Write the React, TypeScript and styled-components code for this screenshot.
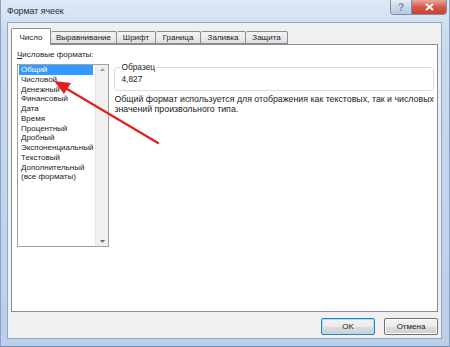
import React from 'react';
import styled, { createGlobalStyle } from 'styled-components';

const GlobalStyle = createGlobalStyle`
  html, body {
    margin: 0;
    padding: 0;
    width: 450px;
    height: 347px;
    overflow: hidden;
    background: #fff;
  }
  * {
    box-sizing: border-box;
  }
`;

const Window = styled.div`
  position: relative;
  width: 450px;
  height: 347px;
  display: flex;
  flex-direction: column;
  padding: 0 7px 7px 6px;
  background: linear-gradient(180deg, #dfe9f5 0%, #c9dbef 10%, #b9cfea 100%);
  border-left: 1px solid #8aa2c4;
  border-right: 1px solid #8aa2c4;
  border-bottom: 1px solid #6f87aa;
  font-family: 'Liberation Sans', Arial, sans-serif;
  font-size: 8px;
  color: #222;
`;

const TitleBar = styled.div`
  height: 22px;
  display: flex;
  align-items: flex-start;
  margin-right: -5px;
`;

const Title = styled.div`
  padding-top: 6px;
  font-size: 8.8px;
  color: #1e2f45;
`;

const CaptionButtons = styled.div`
  margin-left: auto;
  display: flex;
  border: 1px solid #7f8fa6;
  border-top: none;
  border-radius: 0 0 4px 4px;
  overflow: hidden;
  height: 15px;
`;

const CaptionButton = styled.div<{ $close?: boolean }>`
  width: ${({ $close }) => ($close ? '35px' : '20px')};
  height: 100%;
  display: flex;
  align-items: center;
  justify-content: center;
  font-size: 10px;
  font-weight: bold;
  color: ${({ $close }) => ($close ? '#fff' : '#7c8ea8')};
  background: ${({ $close }) =>
    $close
      ? 'linear-gradient(180deg, #e8a89c 0%, #d45a4a 50%, #c8412f 100%)'
      : 'linear-gradient(180deg, #e6eef8 0%, #c9d7e9 50%, #b7c9e1 100%)'};
  border-left: ${({ $close }) => ($close ? '1px solid #7f8fa6' : 'none')};
`;

const Client = styled.div`
  flex: 1;
  display: flex;
  flex-direction: column;
  background: #f0f0f0;
  border: 1px solid #95a6bd;
  padding: 4px 3px 0 3px;
`;

const TabRow = styled.div`
  display: flex;
  align-items: flex-end;
  height: 17px;
  position: relative;
  z-index: 1;
`;

const Tab = styled.div<{ $active?: boolean; $w: number }>`
  width: ${({ $w }) => $w}px;
  height: ${({ $active }) => ($active ? '17px' : '13px')};
  display: flex;
  align-items: center;
  justify-content: center;
  border: 1px solid #898c95;
  border-bottom: ${({ $active }) => ($active ? 'none' : '1px solid #898c95')};
  border-left: ${({ $active }) => ($active ? '1px solid #898c95' : 'none')};
  margin-bottom: ${({ $active }) => ($active ? '-1px' : '0')};
  background: ${({ $active }) =>
    $active ? '#fff' : 'linear-gradient(180deg, #f2f2f2 0%, #ebebeb 50%, #dddddd 100%)'};
  border-radius: 2px 2px 0 0;
  padding-top: ${({ $active }) => ($active ? '1px' : '0')};
  color: #222;
`;

const Panel = styled.div`
  height: 268px;
  background: #fff;
  border: 1px solid #898c95;
  display: flex;
  gap: 5px;
  padding: 4px 5px 0 5px;
`;

const LeftColumn = styled.div`
  width: 96px;
  display: flex;
  flex-direction: column;
`;

const FieldLabel = styled.div`
  height: 15px;
  padding-top: 1px;
  u {
    text-decoration: underline;
  }
`;

const ListBox = styled.div`
  height: 183px;
  border: 1px solid #a0a0a0;
  display: flex;
  background: #fff;
`;

const ListItems = styled.div`
  flex: 1;
  padding: 0 1px;
  overflow: hidden;
`;

const ListItem = styled.div<{ $selected?: boolean }>`
  height: 9.75px;
  line-height: 9.75px;
  padding-left: 2px;
  white-space: nowrap;
  background: ${({ $selected }) => ($selected ? '#3399ff' : 'transparent')};
  color: ${({ $selected }) => ($selected ? '#fff' : '#222')};
  margin-right: 1px;
`;

const ScrollBar = styled.div`
  width: 13px;
  background: #f0f0f0;
  border-left: 1px solid #e6e6e6;
  display: flex;
  flex-direction: column;
  justify-content: space-between;
  align-items: center;
  padding: 3px 0;
`;

const RightColumn = styled.div`
  flex: 1;
  display: flex;
  flex-direction: column;
  padding-top: 13px;
`;

const GroupBox = styled.fieldset`
  margin: 0;
  padding: 0 6px 2px 6px;
  border: 1px solid #d8dde3;
  border-radius: 3px;
  height: 29px;
  legend {
    padding: 0 1px;
    margin-left: -1px;
    font-size: 8.4px;
    line-height: 11px;
  }
`;

const SampleValue = styled.div`
  line-height: 12px;
  font-size: 8.4px;
`;

const Description = styled.div`
  margin-top: 4px;
  line-height: 9.5px;
  font-size: 8.8px;
  white-space: nowrap;
`;

const Footer = styled.div`
  display: flex;
  justify-content: flex-end;
  gap: 9px;
  padding: 6px 0 0 0;
`;

const DialogButton = styled.button<{ $default?: boolean }>`
  width: 54px;
  height: 17px;
  padding: 0;
  font-family: inherit;
  font-size: 8px;
  color: #222;
  border-radius: 2px;
  border: 1px solid ${({ $default }) => ($default ? '#3c7fb1' : '#707070')};
  box-shadow: ${({ $default }) => ($default ? 'inset 0 0 0 1px #9fe1f7' : 'inset 0 0 0 1px #fbfbfb')};
  background: linear-gradient(180deg, #f3f3f3 0%, #ebebeb 50%, #dddddd 51%, #cfcfcf 100%);
`;

const ArrowOverlay = styled.svg`
  position: absolute;
  left: 0;
  top: 0;
  pointer-events: none;
`;

const formats = [
  'Общий',
  'Числовой',
  'Денежный',
  'Финансовый',
  'Дата',
  'Время',
  'Процентный',
  'Дробный',
  'Экспоненциальный',
  'Текстовый',
  'Дополнительный',
  '(все форматы)',
];

const tabs = [
  { label: 'Число', w: 40 },
  { label: 'Выравнивание', w: 66 },
  { label: 'Шрифт', w: 39 },
  { label: 'Граница', w: 45 },
  { label: 'Заливка', w: 45 },
  { label: 'Защита', w: 42 },
];

export default function App() {
  return (
    <>
      <GlobalStyle />
      <Window>
        <TitleBar>
          <Title>Формат ячеек</Title>
          <CaptionButtons>
            <CaptionButton>?</CaptionButton>
            <CaptionButton $close>
              <svg width="9" height="8" viewBox="0 0 9 8">
                <path d="M1 1 L8 7 M8 1 L1 7" stroke="#fff" strokeWidth="1.8" />
              </svg>
            </CaptionButton>
          </CaptionButtons>
        </TitleBar>
        <Client>
          <TabRow>
            {tabs.map((t, i) => (
              <Tab key={t.label} $w={t.w} $active={i === 0}>
                {t.label}
              </Tab>
            ))}
          </TabRow>
          <Panel>
            <LeftColumn>
              <FieldLabel>
                <u>Ч</u>исловые форматы:
              </FieldLabel>
              <ListBox>
                <ListItems>
                  {formats.map((f, i) => (
                    <ListItem key={f} $selected={i === 0}>
                      {f}
                    </ListItem>
                  ))}
                </ListItems>
                <ScrollBar>
                  <svg width="5" height="3" viewBox="0 0 5 3">
                    <path d="M0 3 L2.5 0 L5 3 Z" fill="#9a9a9a" />
                  </svg>
                  <svg width="5" height="3" viewBox="0 0 5 3">
                    <path d="M0 0 L2.5 3 L5 0 Z" fill="#6a6a6a" />
                  </svg>
                </ScrollBar>
              </ListBox>
            </LeftColumn>
            <RightColumn>
              <GroupBox>
                <legend>Образец</legend>
                <SampleValue>4,827</SampleValue>
              </GroupBox>
              <Description>
                Общий формат используется для отображения как текстовых, так и числовых
                <br />
                значений произвольного типа.
              </Description>
            </RightColumn>
          </Panel>
          <Footer>
            <DialogButton $default>OK</DialogButton>
            <DialogButton>Отмена</DialogButton>
          </Footer>
        </Client>
        <ArrowOverlay width="450" height="347" viewBox="0 0 450 347">
          <line x1="157" y1="143" x2="66" y2="89" stroke="#e3211c" strokeWidth="2.2" strokeLinecap="round" />
          <path d="M53 81 L70 83 L63 94 Z" fill="#e3211c" />
        </ArrowOverlay>
      </Window>
    </>
  );
}
